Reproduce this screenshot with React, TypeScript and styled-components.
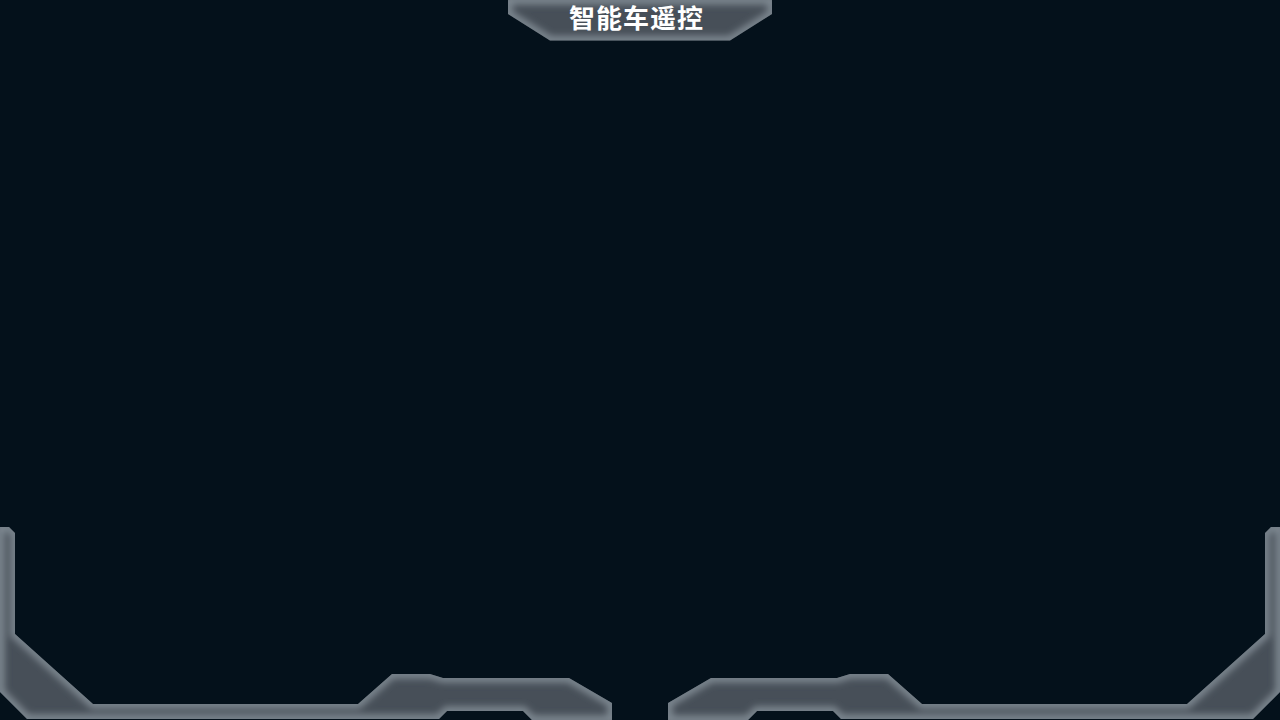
import React from "react";
import styled, { createGlobalStyle } from "styled-components";

const GlobalStyle = createGlobalStyle`
  html, body, #root { margin: 0; padding: 0; width: 100%; height: 100%; }
  body {
    background: #04111b;
    font-family: "Noto Sans CJK SC", "Noto Sans", sans-serif;
    overflow: hidden;
  }
`;

const Screen = styled.div`
  width: 100vw;
  height: 100vh;
  display: flex;
  flex-direction: column;
  justify-content: space-between;
  align-items: center;
  background: #04111b;
`;

const Banner = styled.header`
  position: relative;
  width: 264px;
  height: 41px;
  display: flex;
  align-items: flex-start;
  justify-content: center;
`;

const Plate = styled.svg`
  position: absolute;
  inset: 0;
  width: 100%;
  height: 100%;
`;

const Title = styled.h1`
  position: relative;
  margin: 0;
  padding-top: 1px;
  font-size: 26px;
  line-height: 32px;
  font-weight: 700;
  color: #ffffff;
  letter-spacing: 1px;
  padding-right: 7px;
`;

const Footer = styled.footer`
  width: 100%;
  height: 193px;
  display: flex;
`;

const Frame = styled.svg`
  width: 100%;
  height: 100%;
  display: block;
`;

const BASE = "#474f58";
const EDGE = "#7e8891";

const leftPts: [number, number][] = [
  [0, 527], [9, 527], [15, 533], [15, 634], [93, 704], [358, 704], [392, 674],
  [430, 674], [443, 678], [569, 678], [612, 703], [612, 720], [532, 720],
  [523, 711], [447, 711], [439, 719], [27, 719], [0, 692],
];

const toPath = (pts: [number, number][]) => pts.map((p) => p.join(",")).join(" ");
const leftPath = toPath(leftPts);
const rightPath = toPath(leftPts.map(([x, y]) => [1280 - x, y] as [number, number]));
const bannerPath = "0,0 264,0 264,14 222,40.5 42,40.5 0,14";

const GlowShape: React.FC<{ id: string; points: string; filterId: string }> = ({ id, points, filterId }) => (
  <g>
    <clipPath id={id}>
      <polygon points={points} />
    </clipPath>
    <polygon points={points} fill={BASE} />
    <g clipPath={`url(#${id})`}>
      <polygon points={points} fill="none" stroke={EDGE} strokeWidth={9} filter={`url(#${filterId})`} />
    </g>
  </g>
);

export default function App() {
  return (
    <>
      <GlobalStyle />
      <Screen>
        <Banner>
          <Plate viewBox="0 0 264 41" preserveAspectRatio="none">
            <defs>
              <filter id="bblur" x="-20%" y="-50%" width="140%" height="200%">
                <feGaussianBlur stdDeviation="3.5" />
              </filter>
            </defs>
            <GlowShape id="bclip" points={bannerPath} filterId="bblur" />
          </Plate>
          <Title>智能车遥控</Title>
        </Banner>
        <Footer>
          <Frame viewBox="0 527 1280 193" preserveAspectRatio="none">
            <defs>
              <filter id="fblur" x="-10%" y="-10%" width="120%" height="120%">
                <feGaussianBlur stdDeviation="3.5" />
              </filter>
            </defs>
            <GlowShape id="lclip" points={leftPath} filterId="fblur" />
            <GlowShape id="rclip" points={rightPath} filterId="fblur" />
          </Frame>
        </Footer>
      </Screen>
    </>
  );
}
